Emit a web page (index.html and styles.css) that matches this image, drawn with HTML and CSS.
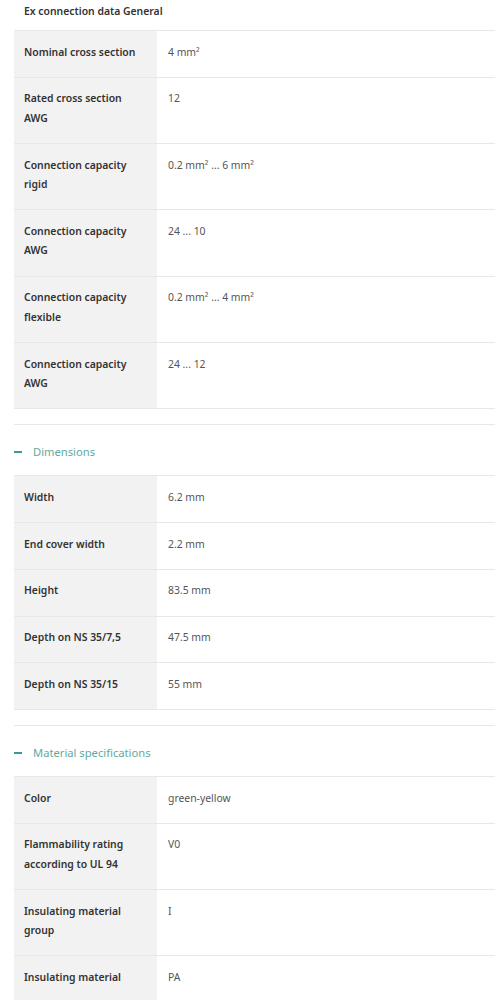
FILE: index.html
```html
<!DOCTYPE html>
<html>
<head>
<meta charset="utf-8">
<link rel="stylesheet" href="styles.css">
</head>
<body>
<div class="page">
  <div class="group-title">Ex connection data General</div>
  <div class="table">
    <div class="row"><div class="label">Nominal cross section</div><div class="value">4 mm²</div></div>
    <div class="row"><div class="label">Rated cross section AWG</div><div class="value">12</div></div>
    <div class="row"><div class="label">Connection capacity rigid</div><div class="value">0.2 mm² ... 6 mm²</div></div>
    <div class="row"><div class="label">Connection capacity AWG</div><div class="value">24 ... 10</div></div>
    <div class="row"><div class="label">Connection capacity flexible</div><div class="value">0.2 mm² ... 4 mm²</div></div>
    <div class="row"><div class="label">Connection capacity AWG</div><div class="value">24 ... 12</div></div>
  </div>

  <div class="section">
    <div class="section-head"><span class="minus"></span><span class="section-name">Dimensions</span></div>
    <div class="table">
      <div class="row"><div class="label">Width</div><div class="value">6.2 mm</div></div>
      <div class="row"><div class="label">End cover width</div><div class="value">2.2 mm</div></div>
      <div class="row"><div class="label">Height</div><div class="value">83.5 mm</div></div>
      <div class="row"><div class="label">Depth on NS 35/7,5</div><div class="value">47.5 mm</div></div>
      <div class="row"><div class="label">Depth on NS 35/15</div><div class="value">55 mm</div></div>
    </div>
  </div>

  <div class="section">
    <div class="section-head"><span class="minus"></span><span class="section-name">Material specifications</span></div>
    <div class="table">
      <div class="row"><div class="label">Color</div><div class="value">green-yellow</div></div>
      <div class="row"><div class="label">Flammability rating according to UL 94</div><div class="value">V0</div></div>
      <div class="row"><div class="label">Insulating material group</div><div class="value">I</div></div>
      <div class="row"><div class="label">Insulating material</div><div class="value">PA</div></div>
    </div>
  </div>
</div>
</body>
</html>
```

FILE: styles.css
```css
html, body {
  margin: 0;
  padding: 0;
  background: #ffffff;
}
body {
  font-family: "Noto Sans", "Open Sans", sans-serif;
  font-size: 10.4px;
  color: #333333;
}
.page {
  width: 481px;
  padding-left: 14px;
}
.group-title {
  height: 30px;
  box-sizing: border-box;
  padding-top: 1px;
  line-height: 20px;
  padding-left: 10px;
  font-weight: 600;
  color: #333333;
}
.table {
  border-top: 1px solid #e8e8e8;
}
.row {
  display: grid;
  grid-template-columns: 143px 1fr;
  border-bottom: 1px solid #e8e8e8;
  line-height: 19.5px;
}
.label {
  background: #f2f2f2;
  padding: 11.6px 10px 14.7px 10px;
  font-weight: 600;
  color: #333333;
}
.value {
  padding: 11.6px 10px 14.7px 11px;
  color: #555555;
}
.section {
  margin-top: 15px;
  border-top: 1px solid #e8e8e8;
}
.section-head {
  height: 50px;
  box-sizing: border-box;
  padding-top: 3px;
  display: flex;
  align-items: center;
  gap: 11px;
}
.minus {
  width: 8px;
  height: 2px;
  background: #3c9a92;
}
.section-name {
  font-size: 11.2px;
  color: #5fa9a2;
}
```
